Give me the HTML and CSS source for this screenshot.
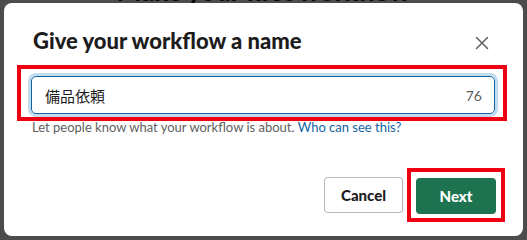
FILE: index.html
```html
<!DOCTYPE html>
<html lang="en">
<head>
<meta charset="utf-8">
<title>Give your workflow a name</title>
<link rel="stylesheet" href="styles.css">
</head>
<body>
<div class="page">
  <h1 class="page-title">Make your first workflow</h1>
</div>
<div class="backdrop">
  <div class="dialog" role="dialog" aria-labelledby="dlg-title">
    <div class="dialog-header">
      <h2 id="dlg-title" class="dialog-title">Give your workflow a name</h2>
      <button class="close-btn" aria-label="Close">
        <svg width="14" height="14" viewBox="0 0 14 14"><path d="M1.5 1.5 L12.5 12.5 M12.5 1.5 L1.5 12.5" stroke="#616061" stroke-width="1.5" stroke-linecap="round" fill="none"/></svg>
      </button>
    </div>
    <div class="annot">
      <div class="field">
        <span class="field-value">備品依頼</span>
        <span class="field-count">76</span>
      </div>
    </div>
    <p class="hint">Let people know what your workflow is about. <a href="#" class="hint-link">Who can see this?</a></p>
    <div class="dialog-footer">
      <button class="btn btn-cancel">Cancel</button>
      <div class="annot-btn">
        <button class="btn btn-next">Next</button>
      </div>
    </div>
  </div>
</div>
</body>
</html>
```
FILE: styles.css
```css
html, body {
  margin: 0;
  padding: 0;
}
body {
  width: 527px;
  height: 240px;
  overflow: hidden;
  background: #fff;
  font-family: Lato, "Noto Sans CJK JP", sans-serif;
  position: relative;
}
.page {
  display: flex;
  justify-content: center;
}
.page-title {
  margin: -24px 0 0 0;
  font-size: 26px;
  font-weight: 900;
  color: #1d1c1d;
  line-height: 30px;
}
.backdrop {
  position: absolute;
  inset: 0;
  background: rgba(0, 0, 0, 0.7);
  padding: 3px 4px 4px 4px;
  box-sizing: border-box;
}
.dialog {
  background: #fff;
  border-radius: 8px;
  height: 233px;
  width: 519px;
  display: flex;
  flex-direction: column;
}
.dialog-header {
  display: flex;
  align-items: center;
  justify-content: space-between;
  padding: 22px 34px 0 29px;
  height: 31px;
}
.dialog-title {
  margin: 0;
  font-size: 22px;
  font-weight: 900;
  color: #1d1c1d;
  line-height: 28px;
}
.close-btn {
  border: 0;
  background: none;
  padding: 0;
  width: 14px;
  height: 14px;
  display: flex;
  margin-top: 4px;
}
.annot {
  margin: 9px 16px 0 13px;
  border: 4px solid #ef0012;
  padding: 7px 8px 3px 10px;
}
.field {
  height: 38px;
  box-sizing: border-box;
  border: 1px solid #1264a3;
  border-radius: 5px;
  box-shadow: 0 0 0 3px #c3dbef;
  display: flex;
  align-items: center;
  justify-content: space-between;
  padding: 0 12px 0 13px;
}
.field-value {
  font-family: "Noto Sans CJK JP", sans-serif;
  font-size: 15px;
  color: #1d1c1d;
}
.field-count {
  font-size: 14px;
  color: #616061;
}
.hint {
  margin: -3px 0 0 28px;
  font-size: 13px;
  line-height: 18px;
  color: #616061;
}
.hint-link {
  color: #1264a3;
  text-decoration: none;
}
.dialog-footer {
  margin-top: auto;
  display: flex;
  align-items: center;
  justify-content: flex-end;
  padding: 0 18px 14px 0;
}
.btn {
  height: 36px;
  box-sizing: border-box;
  border-radius: 4px;
  font-family: Lato, sans-serif;
  font-size: 15px;
  font-weight: 900;
  padding: 0 16px;
}
.btn-cancel {
  width: 79px;
  background: #fff;
  color: #1d1c1d;
  border: 1px solid rgba(29, 28, 29, 0.3);
  margin-right: 4px;
}
.annot-btn {
  border: 4px solid #ef0012;
  padding: 6px 5px 4px 5px;
  display: flex;
}
.btn-next {
  width: 80px;
  background: #1d7350;
  color: #fff;
  border: 0;
}
```
